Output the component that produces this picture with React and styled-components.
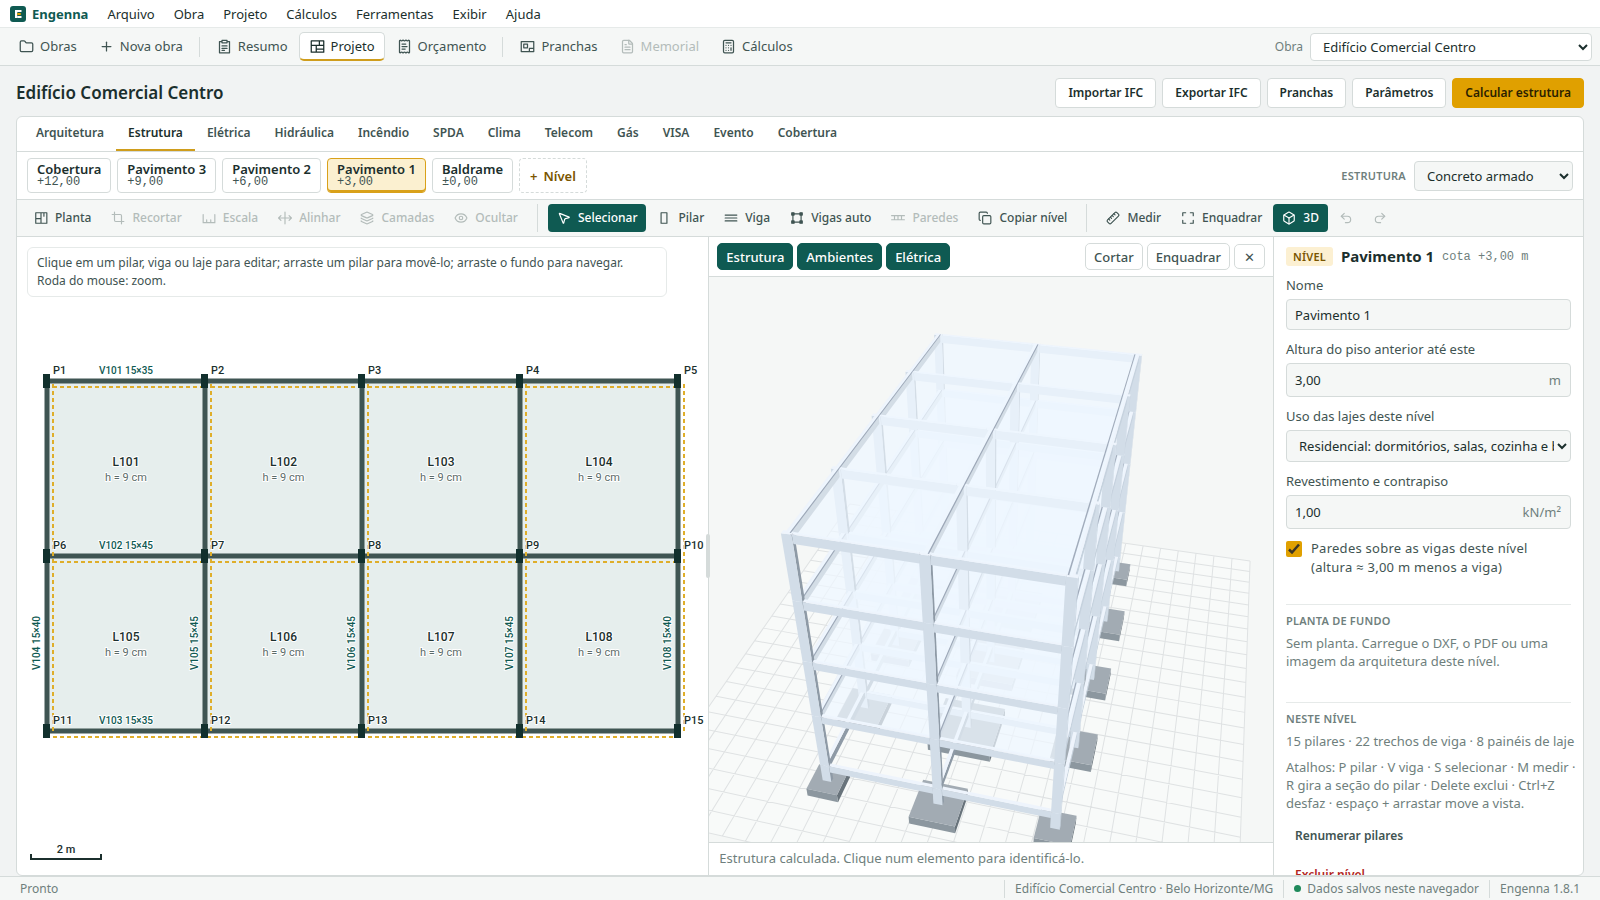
import React, { useState } from "react";
import styled, { createGlobalStyle, ThemeProvider, css } from "styled-components";
import {
  Folder,
  Plus,
  ReceiptText,
  FileText,
  Calculator,
  Crop,
  Layers,
  Eye,
  MousePointer2,
  Copy,
  Ruler,
  Box,
  Undo2,
  Redo2,
} from "lucide-react";

const theme = {
  ink: "#1b2f2d",
  text: "#3f5452",
  muted: "#6f7f7d",
  disabled: "#b3bcba",
  line: "#d5dbda",
  soft: "#e6eae9",
  page: "#f1f3f3",
  bar: "#f5f7f6",
  white: "#ffffff",
  green: "#0f5a52",
  amber: "#e0a000",
  brown: "#7a5500",
  red: "#b3261e",
};

const GlobalStyle = createGlobalStyle`
  * {
    box-sizing: border-box;
  }

  body {
    margin: 0;
    font-family: "Noto Sans", "Open Sans", sans-serif;
    font-size: 13px;
    line-height: 18px;
    color: #1b2f2d;
    background: #f1f3f3;
  }

  button,
  input,
  select {
    font: inherit;
    color: inherit;
    margin: 0;
  }

  h1, h2, h3, p {
    margin: 0;
  }
`;

const Page = styled.div`
  height: 100vh;
  display: flex;
  flex-direction: column;
`;

const MenuBar = styled.nav`
  height: 28px;
  flex: none;
  display: flex;
  align-items: center;
  gap: 1px;
  padding: 0 10px;
  background: ${(props) => props.theme.white};
  border-bottom: 1px solid ${(props) => props.theme.soft};
`;

const Brand = styled.strong`
  display: flex;
  align-items: center;
  gap: 6px;
  margin-right: 9px;
  font-weight: 700;
  color: ${(props) => props.theme.green};
`;

const MenuItem = styled.button`
  border: none;
  background: none;
  padding: 0 9px;
  color: ${(props) => props.theme.ink};
`;

const NavBar = styled.div`
  height: 38px;
  flex: none;
  display: flex;
  align-items: center;
  gap: 1px;
  padding: 0 8px;
  background: ${(props) => props.theme.bar};
  border-bottom: 1px solid ${(props) => props.theme.line};
`;

const NavButton = styled.button`
  height: 29px;
  display: flex;
  align-items: center;
  gap: 6px;
  padding: 0 9px 0 10px;
  border: 1px solid transparent;
  border-bottom: 2px solid transparent;
  border-radius: 5px;
  background: none;
  color: ${(props) => props.theme.text};

  &:disabled {
    color: ${(props) => props.theme.disabled};
  }

  ${(props) =>
    props.$active &&
    css`
      background: ${props.theme.white};
      border-color: ${props.theme.line};
      border-bottom-color: #cf9d1c;
      color: ${props.theme.ink};
    `}
`;

const Divider = styled.span`
  width: 1px;
  height: ${(props) => (props.$tall ? 28 : 20)}px;
  margin: 0 ${(props) => (props.$tall ? 8 : 5)}px;
  background: ${(props) => props.theme.line};
`;

const WorkLabel = styled.label`
  display: flex;
  align-items: center;
  gap: 7px;
  margin-left: auto;
  font-size: 12px;
  color: ${(props) => props.theme.muted};
`;

const Select = styled.select`
  width: ${(props) => props.$width};
  height: ${(props) => props.$height}px;
  padding: 0 0 0 8px;
  border: 1px solid ${(props) => props.theme.line};
  border-radius: 4px;
  background: ${(props) => (props.$soft ? props.theme.bar : props.theme.white)};
  color: ${(props) => props.theme.ink};
  font-size: 13px;
`;

const Main = styled.main`
  flex: 1;
  min-height: 0;
  display: flex;
  flex-direction: column;
  padding: 12px 16px 0;
`;

const Heading = styled.header`
  display: flex;
  align-items: center;
  justify-content: space-between;
  margin-bottom: 8px;
`;

const Title = styled.h1`
  font-size: 17px;
  line-height: 24px;
  font-weight: 600;
`;

const Actions = styled.div`
  display: flex;
  gap: 6px;
`;

const Button = styled.button`
  height: 30px;
  padding: 0 12px;
  border: 1px solid ${(props) => (props.$primary ? props.theme.amber : props.theme.line)};
  border-radius: 4px;
  background: ${(props) => (props.$primary ? props.theme.amber : props.theme.white)};
  color: ${(props) => (props.$primary ? "#2b1f00" : props.theme.ink)};
  font-size: 12px;
  font-weight: 600;
`;

const Card = styled.section`
  flex: 1;
  min-height: 0;
  display: flex;
  flex-direction: column;
  overflow: hidden;
  border: 1px solid ${(props) => props.theme.line};
  border-radius: 6px;
  background: ${(props) => props.theme.white};
`;

const Tabs = styled.div`
  height: 35px;
  flex: none;
  display: flex;
  padding: 0 7px;
  border-bottom: 1px solid ${(props) => props.theme.line};
`;

const Tab = styled.button`
  padding: 0 12px;
  border: none;
  border-bottom: 2px solid ${(props) => (props.$active ? "#cf9d1c" : "transparent")};
  background: none;
  color: ${(props) => (props.$active ? props.theme.ink : props.theme.text)};
  font-size: 12px;
  font-weight: 600;
`;

const Levels = styled.div`
  height: 48px;
  flex: none;
  display: flex;
  align-items: center;
  gap: 6px;
  padding: 0 10px;
  border-bottom: 1px solid ${(props) => props.theme.line};
`;

const LevelChip = styled.button`
  height: 35px;
  display: flex;
  flex-direction: column;
  justify-content: center;
  align-items: flex-start;
  padding: 0 9px 2px;
  border: 1px solid ${(props) => props.theme.line};
  border-radius: 4px;
  background: ${(props) => props.theme.white};
  font-weight: 600;
  line-height: 14px;

  ${(props) =>
    props.$active &&
    css`
      background: #fbf0d0;
      border-color: #d9a11a;
      box-shadow: inset 0 -2px 0 #d9a11a;
    `}
`;

const LevelHeight = styled.span`
  font-family: "Liberation Mono", monospace;
  font-size: 12px;
  line-height: 12px;
  font-weight: 400;
  color: ${(props) => props.theme.text};
`;

const AddLevel = styled.button`
  height: 35px;
  display: flex;
  align-items: center;
  gap: 6px;
  padding: 0 10px;
  border: 1px dashed ${(props) => props.theme.line};
  border-radius: 4px;
  background: none;
  color: ${(props) => props.theme.brown};
  font-weight: 600;
`;

const Caption = styled.h3`
  font-size: 11px;
  line-height: 16px;
  font-weight: 600;
  letter-spacing: 0.02em;
  text-transform: uppercase;
  color: ${(props) => props.theme.muted};
`;

const StructureLabel = styled.label`
  display: flex;
  align-items: center;
  gap: 8px;
  margin-left: auto;
`;

const Tools = styled.div`
  height: 37px;
  flex: none;
  display: flex;
  align-items: center;
  gap: 2px;
  padding: 0 8px;
  background: ${(props) => props.theme.bar};
  border-bottom: 1px solid ${(props) => props.theme.line};
`;

const Tool = styled.button`
  height: 28px;
  display: flex;
  align-items: center;
  gap: 7px;
  padding: 0 9px;
  border: none;
  border-radius: 4px;
  background: ${(props) => (props.$active ? props.theme.green : "none")};
  color: ${(props) => (props.$active ? props.theme.white : props.theme.text)};
  font-size: 12px;
  font-weight: 500;

  &:disabled {
    color: ${(props) => props.theme.disabled};
  }
`;

const Workspace = styled.div`
  flex: 1;
  min-height: 0;
  display: grid;
  grid-template-columns: 11fr 9fr 309px;
`;

const PlanPane = styled.div`
  position: relative;
  min-width: 0;
  min-height: 0;
`;

const Hint = styled.p`
  position: absolute;
  top: 10px;
  left: 10px;
  width: 640px;
  max-width: calc(100% - 20px);
  padding: 6px 9px;
  border: 1px solid ${(props) => props.theme.soft};
  border-radius: 6px;
  background: ${(props) => props.theme.white};
  color: ${(props) => props.theme.text};
  font-size: 12px;
`;

const Drawing = styled.svg`
  display: block;
  width: 100%;
  height: 100%;
`;

const ModelPane = styled.div`
  position: relative;
  min-width: 0;
  min-height: 0;
  display: flex;
  flex-direction: column;
  border-left: 1px solid ${(props) => props.theme.line};
  border-right: 1px solid ${(props) => props.theme.line};
`;

const Handle = styled.span`
  position: absolute;
  top: calc(50% - 22px);
  left: -3px;
  width: 4px;
  height: 44px;
  border-radius: 2px;
  background: ${(props) => props.theme.line};
`;

const ModelBar = styled.div`
  height: 40px;
  flex: none;
  display: flex;
  align-items: center;
  gap: 4px;
  padding: 0 8px;
  border-bottom: 1px solid ${(props) => props.theme.line};
`;

const Spacer = styled.span`
  flex: 1;
`;

const Toggle = styled.button`
  height: ${(props) => (props.$small ? 25 : 27)}px;
  padding: 0 ${(props) => (props.$small ? 9 : 8)}px;
  border: 1px solid ${(props) => (props.$on ? props.theme.green : props.theme.line)};
  border-radius: 5px;
  background: ${(props) => (props.$on ? props.theme.green : props.theme.white)};
  color: ${(props) => (props.$on ? props.theme.white : props.theme.text)};
  font-weight: 500;
`;

const Viewport = styled.div`
  flex: 1;
  min-height: 0;
  background: ${(props) => props.theme.bar};
`;

const ModelStatus = styled.p`
  height: 33px;
  flex: none;
  padding: 6px 10px;
  border-top: 1px solid ${(props) => props.theme.line};
  color: ${(props) => props.theme.muted};
`;

const Side = styled.aside`
  min-height: 0;
  overflow: hidden;
  padding: 10px 12px 0;
`;

const SideHead = styled.div`
  display: flex;
  align-items: center;
  gap: 8px;
  height: 19px;
  margin-bottom: 10px;
`;

const Badge = styled.span`
  padding: 0 7px;
  border-radius: 3px;
  background: #fcf0d2;
  color: ${(props) => props.theme.brown};
  font-size: 11px;
  line-height: 19px;
  font-weight: 600;
  letter-spacing: 0.02em;
`;

const SideTitle = styled.h2`
  font-size: 15px;
  line-height: 19px;
  font-weight: 700;
`;

const Quota = styled.span`
  font-family: "Liberation Mono", monospace;
  font-size: 12px;
  color: ${(props) => props.theme.muted};
`;

const Field = styled.label`
  display: flex;
  flex-direction: column;
  gap: 5px;
  margin-bottom: 10px;
  color: ${(props) => props.theme.text};
`;

const InputBox = styled.span`
  height: ${(props) => (props.$unit ? 34 : 31)}px;
  display: flex;
  align-items: center;
  padding: 0 9px 0 8px;
  border: 1px solid ${(props) => props.theme.line};
  border-radius: 4px;
  background: ${(props) => props.theme.bar};
  color: ${(props) => props.theme.muted};
`;

const Input = styled.input`
  flex: 1;
  min-width: 0;
  padding: 0;
  border: none;
  outline: none;
  background: none;
  color: ${(props) => props.theme.ink};
`;

const Check = styled.label`
  display: flex;
  gap: 9px;
  margin-top: 10px;
  line-height: 19px;
  letter-spacing: 0.02em;
  color: ${(props) => props.theme.text};
`;

const CheckInput = styled.input`
  appearance: none;
  width: 16px;
  height: 16px;
  flex: none;
  margin: 2px 0;
  border-radius: 2px;
  background: ${(props) => props.theme.amber};
`;

const CheckMark = styled.span`
  position: relative;
  display: flex;

  svg {
    position: absolute;
    top: 2px;
    left: 0;
    pointer-events: none;
  }
`;

const Block = styled.section`
  margin-top: ${(props) => props.$gap}px;
  padding-top: 8px;
  border-top: 1px solid ${(props) => props.theme.soft};
`;

const Note = styled.p`
  margin: ${(props) => props.$gap || 5}px -8px 0 0;
  color: ${(props) => props.theme.muted};
`;

const LinkButton = styled.button`
  display: block;
  height: 30px;
  margin-top: 9px;
  padding: 0 9px;
  border: none;
  background: none;
  color: ${(props) => (props.$danger ? props.theme.red : props.theme.text)};
  font-weight: 600;
  font-size: 12px;
`;

const StatusBar = styled.footer`
  height: 24px;
  flex: none;
  display: flex;
  align-items: center;
  padding: 0 10px;
  background: ${(props) => props.theme.bar};
  border-top: 1px solid ${(props) => props.theme.line};
  color: ${(props) => props.theme.muted};
  font-size: 12px;
`;

const StatusItem = styled.span`
  display: flex;
  align-items: center;
  gap: 6px;
  padding: 0 10px;

  & + & {
    border-left: 1px solid ${(props) => props.theme.line};
  }

  &:nth-child(2) {
    margin-left: auto;
  }
`;

const Dot = styled.i`
  width: 7px;
  height: 7px;
  border-radius: 50%;
  background: #1f8a5b;
`;

/* icons that the icon package does not have */

const Glyph = ({ size = 14, children }) => (
  <svg
    width={size}
    height={size}
    viewBox="0 0 24 24"
    fill="none"
    stroke="currentColor"
    strokeWidth="2"
    strokeLinecap="round"
    strokeLinejoin="round"
    aria-hidden="true"
  >
    {children}
  </svg>
);

const Logo = () => (
  <svg width="16" height="16" viewBox="0 0 16 16" aria-hidden="true">
    <rect width="16" height="16" rx="3" fill="#0f5a52" />
    <path d="M5 4h6.500v2H7.200v1H5z" fill="#fff" />
    <path d="M5 4h2.200v8H5z" fill="#fff" />
    <path d="M7.200 7h3.600v2H7.200z" fill="#e0a000" />
    <path d="M7.200 10h4.300v2H7.200z" fill="#fff" />
  </svg>
);

const SummaryIcon = () => (
  <Glyph size={15}>
    <path d="M8 4H4v18h16V4h-4M8 2h8v4H8zM8 11h8M8 15h8M8 18h4" />
  </Glyph>
);

const ProjectIcon = () => (
  <Glyph size={15}>
    <path d="M2 3h20v18H2zM2 10h20M10 10v11M15 3v7M10 16h12" />
  </Glyph>
);

const SheetIcon = () => (
  <Glyph size={15}>
    <path d="M2 4h20v16H2zM6 8h6v6H6zM15 20v-5h7" />
  </Glyph>
);

const PlanIcon = () => (
  <Glyph>
    <path d="M3 3h19v18H3zM12 3v18M3 13h9M17 3v6" />
  </Glyph>
);

const ScaleIcon = () => (
  <Glyph>
    <path d="M2 6v14h20V6M8 20v-5M15 20v-5" />
  </Glyph>
);

const AlignIcon = () => (
  <Glyph>
    <path d="M12 2v20M1 12h22M5 8l-4 4 4 4M19 8l4 4-4 4" />
  </Glyph>
);

const PillarIcon = () => (
  <Glyph>
    <path d="M7 3h10v18H7z" />
  </Glyph>
);

const BeamIcon = () => (
  <Glyph>
    <path d="M2 7h20M2 12h20M2 17h20" />
  </Glyph>
);

const AutoBeamIcon = () => (
  <Glyph>
    <path d="M5 5h14v14H5z" />
    <path d="M3 3h4v4H3zM17 3h4v4h-4zM3 17h4v4H3zM17 17h4v4h-4z" fill="currentColor" />
  </Glyph>
);

const WallIcon = () => (
  <Glyph>
    <path d="M1 8h22M1 15h22M6 8v7M12 8v7M18 8v7" />
  </Glyph>
);

const FrameIcon = () => (
  <Glyph>
    <path d="M3 8V3h5M16 3h5v5M21 16v5h-5M8 21H3v-5" />
  </Glyph>
);

const MeasureIcon = styled(Ruler)`
  transform: scaleX(-1);
`;

/* plan view */

const AXES_X = [30, 188, 345, 503, 661];
const AXES_Y = [144, 319, 494];

const PlanText = styled.text`
  font-family: "Roboto", "Inter", sans-serif;
  font-size: ${(props) => props.$size || 10}px;
  font-weight: ${(props) => props.$weight || 500};
  text-anchor: ${(props) => props.$anchor || "start"};
  fill: ${(props) => props.$fill || "#1b2f2d"};
  stroke: #ffffff;
  stroke-width: 2px;
  stroke-linejoin: round;
  paint-order: stroke;
`;

const rowBeams = ["V101 15×35", "V102 15×45", "V103 15×35"];
const columnBeams = ["V104 15×40", "V105 15×45", "V106 15×45", "V107 15×45", "V108 15×40"];

const PlanView = () => {
  const bays = AXES_Y.slice(0, 2).flatMap((y, row) =>
    AXES_X.slice(0, 4).map((x, col) => ({
      x,
      y,
      w: AXES_X[col + 1] - x,
      h: AXES_Y[row + 1] - y,
      name: `L10${row * 4 + col + 1}`,
    }))
  );

  return (
    <Drawing role="img" aria-label="Planta do Pavimento 1">
      <rect x="30" y="144" width="631" height="350" fill="#e6eeed" />
      <g stroke="#3f5553" strokeWidth="5">
        {AXES_Y.map((y) => (
          <line key={y} x1={30} x2={661} y1={y} y2={y} />
        ))}
        {AXES_X.map((x) => (
          <line key={x} x1={x} x2={x} y1={144} y2={494} />
        ))}
      </g>
      <g stroke="#dfae2a" strokeWidth="2" strokeDasharray="4 3">
        {bays.map((b) => (
          <path key={b.name} d={`M${b.x + 6} ${b.y + 6}h${b.w - 8}M${b.x + 6} ${b.y + 3}v${b.h - 1}`} />
        ))}
        <path d="M667 147v348M36 500h625" />
      </g>
      <g fill="#12302d">
        {AXES_Y.map((y) =>
          AXES_X.map((x) => <rect key={`${x}-${y}`} x={x - 4} y={y - 7} width="7" height="14" />)
        )}
      </g>
      {bays.map((b) => (
        <g key={b.name}>
          <PlanText x={b.x + b.w / 2} y={b.y + 85} $size={12} $anchor="middle">
            {b.name}
          </PlanText>
          <PlanText
            x={b.x + b.w / 2}
            y={b.y + 100}
            $size={11}
            $weight={400}
            $anchor="middle"
            $fill="#5b6b69"
          >
            h = 9 cm
          </PlanText>
        </g>
      ))}
      {AXES_Y.map((y, row) =>
        AXES_X.map((x, col) => (
          <PlanText key={`p${row}${col}`} x={x + 6} y={y - 7} $size={11}>
            P{row * 5 + col + 1}
          </PlanText>
        ))
      )}
      {rowBeams.map((name, i) => (
        <PlanText key={name} x={109} y={AXES_Y[i] - 7} $anchor="middle" $fill="#0f5a52">
          {name}
        </PlanText>
      ))}
      {columnBeams.map((name, i) => (
        <PlanText
          key={name}
          transform={`translate(${AXES_X[i] - 7} 406) rotate(-90)`}
          $anchor="middle"
          $fill="#0f5a52"
        >
          {name}
        </PlanText>
      ))}
      <path d="M14 617v5h70v-5" fill="none" stroke="#1b2f2d" strokeWidth="2" />
      <PlanText x={49} y={616} $size={11} $anchor="middle">
        2 m
      </PlanText>
    </Drawing>
  );
};

/* 3D view: u runs away from the viewer, v to the right, z up (metres) */

const BAY_U = 4.5;
const BAY_V = 5;
const ROOF = 12;
const FOCAL = 896;
const YAW = (14.2 * Math.PI) / 180;
const PITCH = (36.5 * Math.PI) / 180;
const CORNER = { r: -7.045, h: 25.55, z: -17.74 };

const project = ([u, v, z]) => {
  const r = CORNER.r + u * Math.sin(YAW) + v * Math.cos(YAW);
  const h = CORNER.h + u * Math.cos(YAW) - v * Math.sin(YAW);
  const up = CORNER.z + z - ROOF;
  const depth = h * Math.cos(PITCH) - up * Math.sin(PITCH);
  const y = -(h * Math.sin(PITCH) + up * Math.cos(PITCH));
  return `${((r / depth) * FOCAL).toFixed(1)},${((y / depth) * FOCAL).toFixed(1)}`;
};

const face = (points, fill, opacity = 1) => ({
  points: points.map(project).join(" "),
  fill,
  opacity,
});

//the camera only ever sees the top, the front (-u) and the right (+v) of a box
const box = (u0, u1, v0, v1, z0, z1, colors) => [
  face([[u0, v1, z0], [u1, v1, z0], [u1, v1, z1], [u0, v1, z1]], colors.side),
  face([[u0, v0, z0], [u0, v1, z0], [u0, v1, z1], [u0, v0, z1]], colors.front),
  face([[u0, v0, z1], [u0, v1, z1], [u1, v1, z1], [u1, v0, z1]], colors.top),
];

const FOOTINGS = [
  [1.4, 2, 1.5],
  [2, 2.9, 1.85],
  [2, 2.8, 1.8],
  [2, 2.8, 1.95],
  [1.5, 2, 1.5],
];

const inner = { top: "#eef4fc", front: "#d2dde8", side: "#8e9aa6" };
const outer = { top: "#eef4fc", front: "#d2dde8", side: "#c6d2de" };
const base = { top: "#a2abb3", front: "#8c979f", side: "#68737b" };

const buildModel = () => {
  const faces = [];

  for (let i = 4; i >= 0; i--) {
    for (let j = 0; j < 3; j++) {
      const s = FOOTINGS[i][j] / 2;
      const u = i * BAY_U;
      const v = j * BAY_V;
      faces.push(...box(u - s, u + s, v - s, v + s, -1.45, -1, base));
    }
  }

  let from = -1;
  [0, 3, 6, 9, 12].forEach((z) => {
    for (let i = 4; i >= 0; i--) {
      const u = i * BAY_U;
      for (let j = 0; j < 3; j++) {
        const v = j * BAY_V;
        const colors = j === 2 ? outer : inner;
        if (i < 4) {
          faces.push(...box(u, u + BAY_U, v - 0.08, v + 0.08, z - 0.4, z, colors));
        }
        faces.push(...box(u - 0.1, u + 0.1, v - 0.2, v + 0.2, from, z, colors));
        if (j < 2) {
          faces.push(...box(u - 0.08, u + 0.08, v + 0.2, v + BAY_V - 0.2, z - 0.4, z, inner));
        }
      }
    }
    if (z > 0) {
      faces.push(face([[0, 0, z], [0, 10, z], [18, 10, z], [18, 0, z]], "#eff6ff", 0.72));
      //shadow line where the slab meets the long beams
      [0.08, 5.08, 9.84].forEach((v) => {
        faces.push(face([[0, v, z], [0, v + 0.05, z], [18, v + 0.05, z], [18, v, z]], "#8f9aab", 0.8));
      });
    }
    from = z;
  });

  return faces;
};

const GRID = Array.from({ length: 25 }, (_, i) => -12.45 + (i * 24.9) / 24);
const gridPath = GRID.map(
  (g) =>
    `M${project([9 + g, -7.45, -1.5])}L${project([9 + g, 17.45, -1.5])}` +
    `M${project([-3.45, 5 + g, -1.5])}L${project([21.45, 5 + g, -1.5])}`
).join("");
const gridFloor = face(
  [[-3.45, -7.45, -1.5], [-3.45, 17.45, -1.5], [21.45, 17.45, -1.5], [21.45, -7.45, -1.5]],
  "#f8faf9"
);
const model = buildModel();

const ModelView = () => (
  <Drawing
    viewBox="-282 -282 564 564"
    preserveAspectRatio="xMidYMid slice"
    role="img"
    aria-label="Modelo 3D da estrutura"
  >
    <polygon points={gridFloor.points} fill={gridFloor.fill} />
    <path d={gridPath} fill="none" stroke="#dfe2e3" strokeWidth="1" />
    {model.map((f, i) => (
      <polygon key={i} points={f.points} fill={f.fill} opacity={f.opacity} />
    ))}
  </Drawing>
);

const menus = ["Arquivo", "Obra", "Projeto", "Cálculos", "Ferramentas", "Exibir", "Ajuda"];

const nav = [
  { label: "Obras", icon: <Folder size={15} /> },
  { label: "Nova obra", icon: <Plus size={15} /> },
  null,
  { label: "Resumo", icon: <SummaryIcon /> },
  { label: "Projeto", icon: <ProjectIcon />, active: true },
  { label: "Orçamento", icon: <ReceiptText size={15} /> },
  null,
  { label: "Pranchas", icon: <SheetIcon /> },
  { label: "Memorial", icon: <FileText size={15} />, disabled: true },
  { label: "Cálculos", icon: <Calculator size={15} /> },
];

const disciplines = [
  "Arquitetura",
  "Estrutura",
  "Elétrica",
  "Hidráulica",
  "Incêndio",
  "SPDA",
  "Clima",
  "Telecom",
  "Gás",
  "VISA",
  "Evento",
  "Cobertura",
];

const levels = [
  { name: "Cobertura", height: "+12,00" },
  { name: "Pavimento 3", height: "+9,00" },
  { name: "Pavimento 2", height: "+6,00" },
  { name: "Pavimento 1", height: "+3,00" },
  { name: "Baldrame", height: "±0,00" },
];

const tools = [
  { label: "Planta", icon: <PlanIcon /> },
  { label: "Recortar", icon: <Crop size={14} />, disabled: true },
  { label: "Escala", icon: <ScaleIcon />, disabled: true },
  { label: "Alinhar", icon: <AlignIcon />, disabled: true },
  { label: "Camadas", icon: <Layers size={14} />, disabled: true },
  { label: "Ocultar", icon: <Eye size={14} />, disabled: true },
  null,
  { label: "Selecionar", icon: <MousePointer2 size={14} />, active: true },
  { label: "Pilar", icon: <PillarIcon /> },
  { label: "Viga", icon: <BeamIcon /> },
  { label: "Vigas auto", icon: <AutoBeamIcon /> },
  { label: "Paredes", icon: <WallIcon />, disabled: true },
  { label: "Copiar nível", icon: <Copy size={14} /> },
  null,
  { label: "Medir", icon: <MeasureIcon size={14} /> },
  { label: "Enquadrar", icon: <FrameIcon /> },
  { label: "3D", icon: <Box size={14} />, active: true },
];

const App = () => {
  const [tab, setTab] = useState("Estrutura");
  const [level, setLevel] = useState("Pavimento 1");
  const [values, setValues] = useState({
    name: "Pavimento 1",
    height: "3,00",
    finish: "1,00",
    walls: true,
  });

  const handleChange = (e) => {
    const { name, type, value, checked } = e.target;
    setValues({ ...values, [name]: type === "checkbox" ? checked : value });
  };

  return (
    <ThemeProvider theme={theme}>
      <GlobalStyle />
      <Page>
        <MenuBar>
          <Brand>
            <Logo />
            Engenna
          </Brand>
          {menus.map((item) => (
            <MenuItem key={item}>{item}</MenuItem>
          ))}
        </MenuBar>
        <NavBar>
          {nav.map((item, i) =>
            item ? (
              <NavButton key={item.label} $active={item.active} disabled={item.disabled}>
                {item.icon}
                {item.label}
              </NavButton>
            ) : (
              <Divider key={i} />
            )
          )}
          <WorkLabel>
            Obra
            <Select $width="282px" $height={28}>
              <option>Edifício Comercial Centro</option>
            </Select>
          </WorkLabel>
        </NavBar>
        <Main>
          <Heading>
            <Title>Edifício Comercial Centro</Title>
            <Actions>
              <Button>Importar IFC</Button>
              <Button>Exportar IFC</Button>
              <Button>Pranchas</Button>
              <Button>Parâmetros</Button>
              <Button $primary>Calcular estrutura</Button>
            </Actions>
          </Heading>
          <Card>
            <Tabs>
              {disciplines.map((item) => (
                <Tab key={item} $active={item === tab} onClick={() => setTab(item)}>
                  {item}
                </Tab>
              ))}
            </Tabs>
            <Levels>
              {levels.map((item) => (
                <LevelChip
                  key={item.name}
                  $active={item.name === level}
                  onClick={() => setLevel(item.name)}
                >
                  {item.name}
                  <LevelHeight>{item.height}</LevelHeight>
                </LevelChip>
              ))}
              <AddLevel>
                <span>+</span>
                <span>Nível</span>
              </AddLevel>
              <StructureLabel>
                <Caption as="span">Estrutura</Caption>
                <Select $width="159px" $height={30} $soft>
                  <option>Concreto armado</option>
                </Select>
              </StructureLabel>
            </Levels>
            <Tools>
              {tools.map((item, i) =>
                item ? (
                  <Tool key={item.label} $active={item.active} disabled={item.disabled}>
                    {item.icon}
                    {item.label}
                  </Tool>
                ) : (
                  <Divider key={i} $tall />
                )
              )}
              <Tool disabled aria-label="Desfazer">
                <Undo2 size={14} />
              </Tool>
              <Tool disabled aria-label="Refazer">
                <Redo2 size={14} />
              </Tool>
            </Tools>
            <Workspace>
              <PlanPane>
                <PlanView />
                <Hint>
                  Clique em um pilar, viga ou laje para editar; arraste um pilar para movê-lo;
                  arraste o fundo para navegar.
                  <br />
                  Roda do mouse: zoom.
                </Hint>
              </PlanPane>
              <ModelPane>
                <ModelBar>
                  <Toggle $on>Estrutura</Toggle>
                  <Toggle $on>Ambientes</Toggle>
                  <Toggle $on>Elétrica</Toggle>
                  <Spacer />
                  <Toggle>Cortar</Toggle>
                  <Toggle>Enquadrar</Toggle>
                  <Toggle $small aria-label="Fechar">
                    ✕
                  </Toggle>
                </ModelBar>
                <Viewport>
                  <ModelView />
                </Viewport>
                <ModelStatus>Estrutura calculada. Clique num elemento para identificá-lo.</ModelStatus>
                <Handle />
              </ModelPane>
              <Side>
                <SideHead>
                  <Badge>NÍVEL</Badge>
                  <SideTitle>Pavimento 1</SideTitle>
                  <Quota>cota +3,00 m</Quota>
                </SideHead>
                <Field>
                  Nome
                  <InputBox>
                    <Input name="name" value={values.name} onChange={handleChange} />
                  </InputBox>
                </Field>
                <Field>
                  Altura do piso anterior até este
                  <InputBox $unit>
                    <Input name="height" value={values.height} onChange={handleChange} />m
                  </InputBox>
                </Field>
                <Field>
                  Uso das lajes deste nível
                  <Select $width="100%" $height={32} $soft>
                    <option>Residencial: dormitórios, salas, cozinha e banheiro</option>
                  </Select>
                </Field>
                <Field>
                  Revestimento e contrapiso
                  <InputBox $unit>
                    <Input name="finish" value={values.finish} onChange={handleChange} />
                    kN/m²
                  </InputBox>
                </Field>
                <Check>
                  <CheckMark>
                    <CheckInput
                      type="checkbox"
                      name="walls"
                      checked={values.walls}
                      onChange={handleChange}
                    />
                    {values.walls && (
                      <svg width="16" height="16" viewBox="0 0 16 16">
                        <path d="M3 8.500l3 3 7-8" fill="none" stroke="#3b3423" strokeWidth="2.500" />
                      </svg>
                    )}
                  </CheckMark>
                  Paredes sobre as vigas deste nível (altura ≈ 3,00 m menos a viga)
                </Check>
                <Block $gap={27}>
                  <Caption>Planta de fundo</Caption>
                  <Note>
                    Sem planta. Carregue o DXF, o PDF ou uma imagem da arquitetura deste nível.
                  </Note>
                </Block>
                <Block $gap={32}>
                  <Caption>Neste nível</Caption>
                  <Note>15 pilares · 22 trechos de viga · 8 painéis de laje</Note>
                  <Note $gap={8}>
                    Atalhos: P pilar · V viga · S selecionar · M medir · R gira a seção do pilar ·
                    Delete exclui · Ctrl+Z desfaz · espaço + arrastar move a vista.
                  </Note>
                  <LinkButton>Renumerar pilares</LinkButton>
                  <LinkButton $danger>Excluir nível</LinkButton>
                </Block>
              </Side>
            </Workspace>
          </Card>
        </Main>
        <StatusBar>
          <StatusItem>Pronto</StatusItem>
          <StatusItem>Edifício Comercial Centro · Belo Horizonte/MG</StatusItem>
          <StatusItem>
            <Dot />
            Dados salvos neste navegador
          </StatusItem>
          <StatusItem>Engenna 1.8.1</StatusItem>
        </StatusBar>
      </Page>
    </ThemeProvider>
  );
};

export default App;
